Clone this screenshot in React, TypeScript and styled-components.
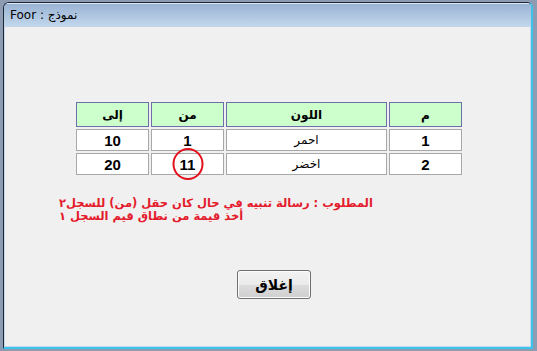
import React from "react";
import styled, { createGlobalStyle } from "styled-components";

const GlobalStyle = createGlobalStyle`
  html, body {
    margin: 0;
    padding: 0;
    overflow: hidden;
    background: #8e9cb3;
  }
`;

const ARABIC = `"DejaVu Sans", "Liberation Sans", sans-serif`;

interface Row {
  num: string;
  color: string;
  from: string;
  to: string;
  circled?: boolean;
}

const rows: Row[] = [
  { num: "1", color: "احمر", from: "1", to: "10" },
  { num: "2", color: "اخضر", from: "11", to: "20", circled: true },
];

export default function App() {
  return (
    <>
      <GlobalStyle />
      <Desktop>
        <Window>
          <TitleBar>Foor : نموذج</TitleBar>
          <Body>
            <Table>
              <HeadCell>م</HeadCell>
              <HeadCell>اللون</HeadCell>
              <HeadCell>من</HeadCell>
              <HeadCell>إلى</HeadCell>
              {rows.map((r) => (
                <React.Fragment key={r.num}>
                  <NumCell>{r.num}</NumCell>
                  <TextCell>{r.color}</TextCell>
                  <NumCell>
                    {r.from}
                    {r.circled && <Circle />}
                  </NumCell>
                  <NumCell>{r.to}</NumCell>
                </React.Fragment>
              ))}
            </Table>

            <Message>
              <Line>المطلوب : رسالة تنبيه في حال كان حقل (من) للسجل٢</Line>
              <Line>أخذ قيمة من نطاق قيم السجل ١</Line>
            </Message>

            <Footer>
              <CloseButton>إغلاق</CloseButton>
            </Footer>
          </Body>
        </Window>
      </Desktop>
    </>
  );
}

const Desktop = styled.div`
  width: 537px;
  height: 351px;
  box-sizing: border-box;
  padding: 2px 4px 0 3px;
`;

const Window = styled.div`
  width: 530px;
  height: 347px;
  box-sizing: border-box;
  display: flex;
  flex-direction: column;
  border: 1px solid #1e2733;
  border-right: 2px solid #3cc3ec;
  border-bottom: 2px solid #3cc3ec;
  border-radius: 6px 6px 0 0;
  overflow: hidden;
  background: #c4d8ee;
`;

const TitleBar = styled.div`
  height: 24px;
  flex-shrink: 0;
  display: flex;
  align-items: center;
  padding-left: 6px;
  padding-bottom: 1px;
  box-sizing: border-box;
  background: linear-gradient(#9ab4d3, #c2d7ed);
  border-top: 1px solid #dce8f5;
  font-family: ${ARABIC};
  font-size: 12px;
  color: #000;
`;

const Body = styled.div`
  flex: 1;
  display: flex;
  flex-direction: column;
  margin: 0 1px 1px 1px;
  background: #f0f0f0;
  padding: 75px 0 0 54px;
`;

const Table = styled.div`
  direction: rtl;
  align-self: flex-start;
  margin-left: 17px;
  display: grid;
  grid-template-columns: 73px 161px 73px 73px;
  grid-template-rows: 25px 22px 22px;
  gap: 2px;
`;

const Cell = styled.div`
  position: relative;
  display: flex;
  align-items: center;
  justify-content: center;
  box-sizing: border-box;
  color: #000;
`;

const HeadCell = styled(Cell)`
  background: #ccffcc;
  border: 1px solid #6e6eaa;
  font-family: ${ARABIC};
  font-weight: bold;
  font-size: 12px;
`;

const NumCell = styled(Cell)`
  background: #fff;
  border: 1px solid #a8a8a8;
  font-family: "Liberation Sans", Arial, sans-serif;
  font-weight: bold;
  font-size: 15px;
`;

const TextCell = styled(Cell)`
  background: #fff;
  border: 1px solid #a8a8a8;
  font-family: ${ARABIC};
  font-size: 12px;
`;

const Circle = styled.span`
  position: absolute;
  left: 50%;
  top: 50%;
  width: 31px;
  height: 32px;
  transform: translate(-50%, -50%);
  box-sizing: border-box;
  border: 2px solid #e3101c;
  border-radius: 50%;
`;

const Message = styled.div`
  direction: rtl;
  margin-top: 22px;
  display: flex;
  flex-direction: column;
  align-items: flex-end;
  align-self: flex-start;
  font-family: ${ARABIC};
  font-weight: bold;
  font-size: 11.5px;
  line-height: 13px;
  color: #e41b2c;
`;

const Line = styled.div`
  white-space: nowrap;
`;

const Footer = styled.div`
  display: flex;
  margin-top: 47px;
  padding-left: 178px;
`;

const CloseButton = styled.button`
  width: 74px;
  height: 29px;
  padding: 0;
  border: 1px solid #707070;
  border-radius: 3px;
  background: linear-gradient(#f2f2f2 0%, #ebebeb 50%, #dddddd 51%, #cfcfcf 100%);
  box-shadow: inset 0 0 0 1px #fcfcfc;
  font-family: ${ARABIC};
  font-weight: bold;
  font-size: 14px;
  color: #000;
`;
